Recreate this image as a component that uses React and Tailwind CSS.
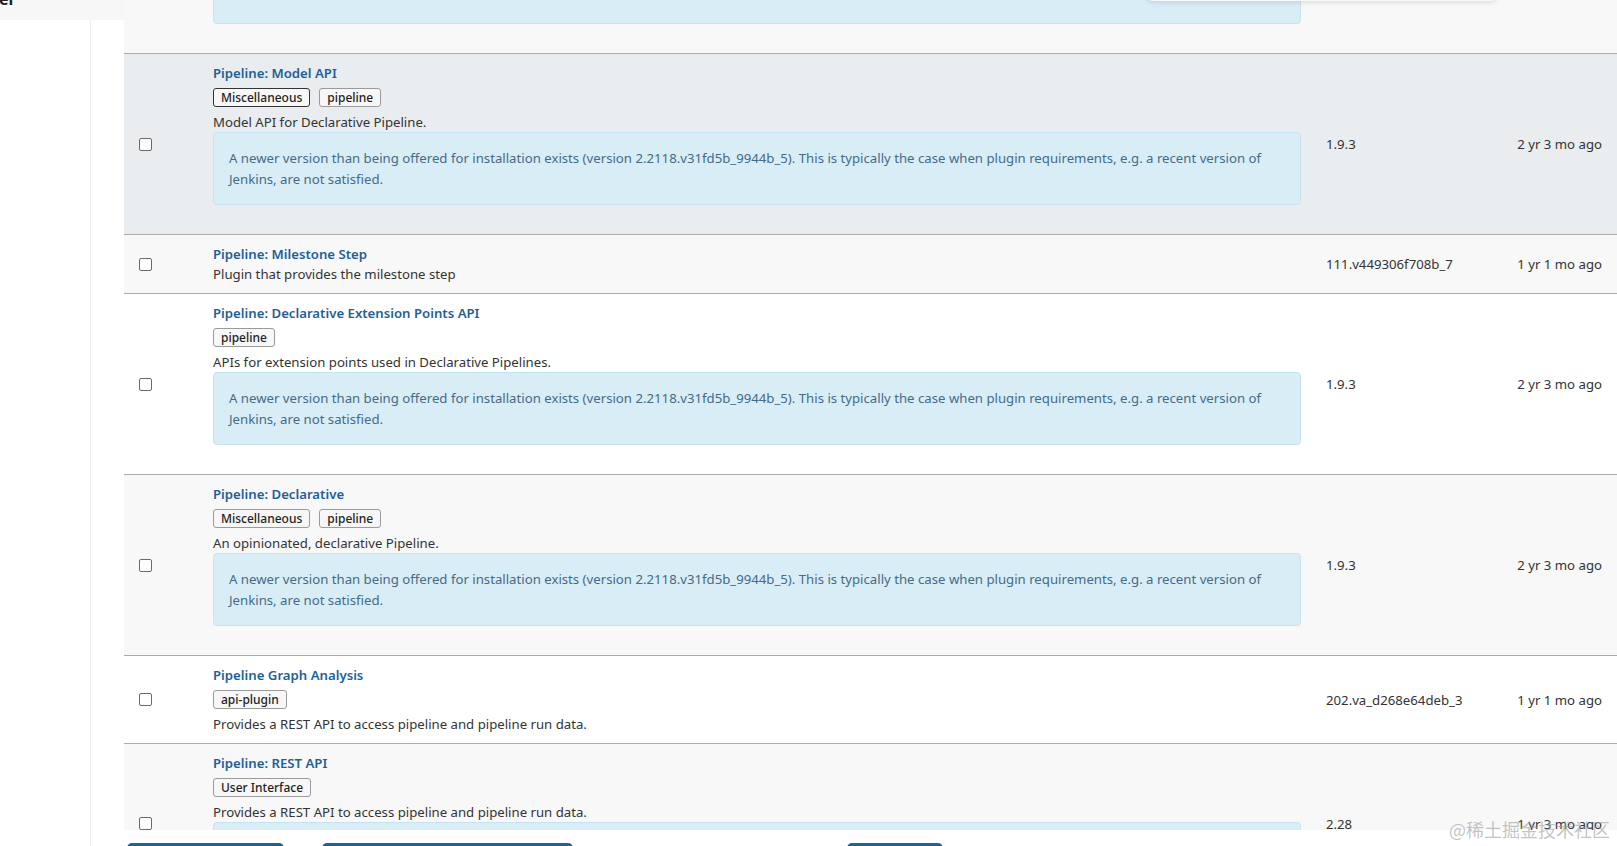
import React from 'react';

const INFO_TEXT =
    'A newer version than being offered for installation exists (version 2.2118.v31fd5b_9944b_5). This is typically the case when plugin requirements, e.g. a recent version of Jenkins, are not satisfied.';

const plugins = [
    {
        id: 'pipeline-model-definition-agent',
        name: 'Pipeline: Declarative Agent API',
        tags: [{ label: 'pipeline' }],
        description: 'Replaced by Pipeline: Declarative Extension Points API plugin.',
        info: 'This plugin is deprecated. In general, this means that it is either obsolete, no longer being developed, or may no longer work.',
        infoTall: true,
        version: '1.1.1',
        released: '6 yr 2 mo ago',
    },
    {
        id: 'pipeline-model-api',
        name: 'Pipeline: Model API',
        tags: [{ label: 'Miscellaneous', active: true }, { label: 'pipeline' }],
        description: 'Model API for Declarative Pipeline.',
        info: INFO_TEXT,
        version: '1.9.3',
        released: '2 yr 3 mo ago',
        hovered: true,
    },
    {
        id: 'pipeline-milestone-step',
        name: 'Pipeline: Milestone Step',
        tags: [],
        description: 'Plugin that provides the milestone step',
        version: '111.v449306f708b_7',
        released: '1 yr 1 mo ago',
    },
    {
        id: 'pipeline-model-extensions',
        name: 'Pipeline: Declarative Extension Points API',
        tags: [{ label: 'pipeline' }],
        description: 'APIs for extension points used in Declarative Pipelines.',
        info: INFO_TEXT,
        version: '1.9.3',
        released: '2 yr 3 mo ago',
    },
    {
        id: 'pipeline-model-definition',
        name: 'Pipeline: Declarative',
        tags: [{ label: 'Miscellaneous' }, { label: 'pipeline' }],
        description: 'An opinionated, declarative Pipeline.',
        info: INFO_TEXT,
        version: '1.9.3',
        released: '2 yr 3 mo ago',
    },
    {
        id: 'pipeline-graph-analysis',
        name: 'Pipeline Graph Analysis',
        tags: [{ label: 'api-plugin' }],
        description: 'Provides a REST API to access pipeline and pipeline run data.',
        version: '202.va_d268e64deb_3',
        released: '1 yr 1 mo ago',
    },
    {
        id: 'pipeline-rest-api',
        name: 'Pipeline: REST API',
        tags: [{ label: 'User Interface' }],
        description: 'Provides a REST API to access pipeline and pipeline run data.',
        info: 'This plugin is up for adoption! We are looking for new maintainers. Visit our Adopt a Plugin initiative for more information.',
        version: '2.28',
        released: '1 yr 3 mo ago',
    },
];

const Tag = ({ label, active }) => (
    <span
        className={
            active
                ? 'inline-flex items-center h-[19px] px-[7px] rounded-[3px] border border-[#333] bg-[#f7f7f7] text-[12px] font-medium text-[#222]'
                : 'inline-flex items-center h-[19px] px-[7px] rounded-[3px] border border-[#9a9a9a] bg-[#f7f7f7] text-[12px] font-medium text-[#222]'
        }
    >
        {label}
    </span>
);

const PluginRow = ({ plugin, index }) => {
    let rowBg = index % 2 === 0 ? 'bg-[#f8f8f8]' : 'bg-white';
    if (plugin.hovered) rowBg = 'bg-[#e9edf0]';

    return (
        <div className={`flex items-center border-t border-[#ababab] first:border-t-0 ${rowBg}`}>
            <div className="w-[89px] shrink-0 pl-[15px] flex items-center">
                <input
                    type="checkbox"
                    className="appearance-none m-0 w-[13px] h-[13px] rounded-[2px] border border-[#6a6a6a] bg-white"
                />
            </div>
            <div className="flex-1 min-w-0 pr-[25px] py-[9px]">
                <a href="#" className="block font-semibold text-[#1f5f98] leading-[20px]">
                    {plugin.name}
                </a>
                {plugin.tags.length > 0 && (
                    <div className="flex gap-[9px] my-[5px]">
                        {plugin.tags.map((tag) => (
                            <Tag key={tag.label} {...tag} />
                        ))}
                    </div>
                )}
                <div className="leading-[20px] text-[#333]">{plugin.description}</div>
                {plugin.info && (
                    <div
                        className={`mb-[20px] px-[15px] pt-[15px] ${plugin.infoTall ? 'pb-[35.5px]' : 'pb-[15px]'} rounded-[4px] border border-[#c6e3f1] bg-[#d9edf7] text-[#456b86] leading-[20.5px]`}
                    >
                        {plugin.info}
                    </div>
                )}
            </div>
            <div className="w-[190px] shrink-0 text-[#333] leading-[20px]">{plugin.version}</div>
            <div className="w-[101px] shrink-0 pr-[15px] text-right text-[#333] leading-[20px] whitespace-nowrap">
                {plugin.released}
            </div>
        </div>
    );
};

const App = () => {
    return (
        <div className="relative w-full h-[846px] overflow-hidden bg-[#f8f8f8] flex font-['Noto_Sans','Liberation_Sans',sans-serif] text-[13.2px]">
            {/* left side */}
            <div className="w-[124px] shrink-0 flex flex-col">
                <div className="h-[20px] shrink-0 overflow-hidden bg-[#f7f7f7]">
                    <span className="block -mt-[9px] -ml-[1px] text-[16px] leading-[16px] font-bold text-[#1e1e1e]">el</span>
                </div>
                <div className="flex-1 flex bg-white">
                    <div className="w-[91px] border-r border-[#ececec]"></div>
                </div>
            </div>

            {/* plugin table, scrolled */}
            <div className="flex-1 min-w-0 flex flex-col bg-white">
                <div className="h-[830px] shrink-0 overflow-hidden bg-[#f8f8f8]">
                    <div className="-mt-[127px]">
                        {plugins.map((plugin, i) => (
                            <PluginRow key={plugin.id} plugin={plugin} index={i} />
                        ))}
                    </div>
                </div>
                <div className="flex shrink-0 pt-[13px]">
                    <div className="ml-[3px] w-[157px] h-[30px] rounded-t-[5px] bg-[#1b6497]"></div>
                    <div className="ml-[38px] w-[251px] h-[30px] rounded-t-[5px] bg-[#1b6497]"></div>
                    <div className="ml-[274px] w-[96px] h-[30px] rounded-t-[5px] bg-[#1b6497]"></div>
                </div>
            </div>

            {/* dropdown edge sticking in from above */}
            <div className="absolute left-[1147px] -top-[40px] w-[350px] h-[41px] rounded-b-[6px] bg-[#f9f9f9] shadow-[0_2px_5px_rgba(0,0,0,0.10)]"></div>

            {/* watermark */}
            <div className="absolute right-[7px] bottom-[6px] text-[18px] leading-[22px] text-[#9c9c9c]/60 font-['Noto_Sans_CJK_SC',sans-serif] pointer-events-none">
                @稀土掘金技术社区
            </div>
        </div>
    );
};

export default App;
